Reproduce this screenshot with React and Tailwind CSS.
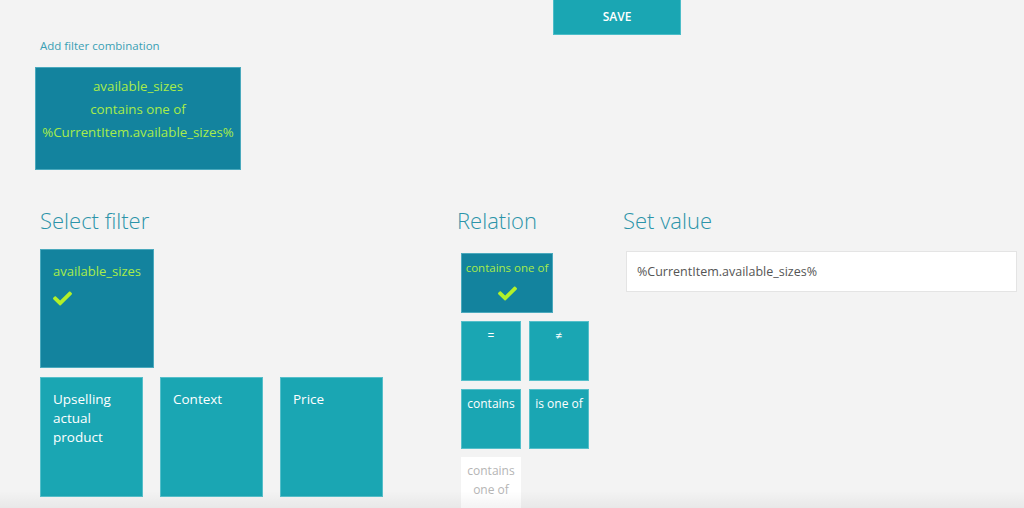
import React, { useState } from 'react';
import { FaCheck } from 'react-icons/fa';

const filters = [
  { id: 'upselling', label: 'Upselling actual product' },
  { id: 'context', label: 'Context' },
  { id: 'price', label: 'Price' },
];

const relations = ['=', '≠', 'contains', 'is one of'];

const App = () => {
  const [value, setValue] = useState('%CurrentItem.available_sizes%');

  return (
    <div className="relative min-h-[508px] bg-[#f3f3f3] font-['Open_Sans',sans-serif] overflow-hidden">
      {/* Save */}
      <div className="flex pl-[553px]">
        <button className="w-[128px] h-[35px] bg-[#1aa6b3] border border-[#4cbdc8] border-t-0 text-white text-[12px] font-semibold">
          SAVE
        </button>
      </div>

      {/* Combination */}
      <div className="pl-[40px] leading-[18px]">
        <a className="text-[11.5px] text-[#3a9fb3]">Add filter combination</a>
      </div>
      <div className="pl-[35px] pt-[12px]">
        <div className="w-[206px] h-[103px] bg-[#13839e] border border-[#4aa9bd] pt-[7px] text-center text-[13.3px] leading-[23px] text-[#a8ec4a]">
          <div>available_sizes</div>
          <div>contains one of</div>
          <div>%CurrentItem.available_sizes%</div>
        </div>
      </div>

      {/* Editor */}
      <div className="flex pl-[40px] pt-[35px]">
        {/* Select filter */}
        <div className="w-[417px]">
          <h2 className="text-[22px] font-light text-[#2b93a9] leading-[30px]">Select filter</h2>
          <div className="mt-[14px] w-[114px] h-[119px] bg-[#13839e] border border-[#4aa9bd] pt-[11px] pl-[12px] text-[13px] leading-[20px] text-[#a8ec4a]">
            <div>available_sizes</div>
            <FaCheck className="mt-[8px] w-[19px] h-[19px] text-[#b2f02a]" />
          </div>
          <div className="mt-[9px] flex gap-[17px]">
            {filters.map((f) => (
              <div
                key={f.id}
                className="w-[103px] h-[120px] bg-[#1aa6b3] border border-[#55bfca] pt-[12px] pl-[12px] pr-[10px] text-[13.5px] leading-[19px] text-white"
              >
                {f.label}
              </div>
            ))}
          </div>
        </div>

        {/* Relation */}
        <div className="w-[166px]">
          <h2 className="text-[22px] font-light text-[#2b93a9] leading-[30px]">Relation</h2>
          <div className="ml-[4px] mt-[18px] w-[92px] h-[60px] bg-[#13839e] border border-[#4aa9bd] pt-[4px] text-center text-[11.5px] leading-[20px] text-[#a8ec4a]">
            <div>contains one of</div>
            <FaCheck className="mx-auto mt-[6px] w-[19px] h-[19px] text-[#b2f02a]" />
          </div>
          <div className="ml-[4px] mt-[8px] grid grid-cols-[60px_60px] gap-x-[8px] gap-y-[8px]">
            {relations.map((r) => (
              <div
                key={r}
                className="h-[60px] bg-[#1aa6b3] border border-[#55bfca] pt-[4px] text-center text-[12px] leading-[20px] text-white"
              >
                {r}
              </div>
            ))}
            <div className="h-[60px] bg-white pt-[4px] text-center text-[12px] leading-[19px] text-[#b5b5b5]">
              contains one of
            </div>
          </div>
        </div>

        {/* Set value */}
        <div className="w-[400px]">
          <h2 className="text-[22px] font-light text-[#2b93a9] leading-[30px]">Set value</h2>
          <input
            value={value}
            onChange={(e) => setValue(e.target.value)}
            className="ml-[3px] mt-[16px] w-[391px] h-[41px] bg-white border border-[#e4e4e4] px-[10px] text-[12.5px] text-[#555] outline-none"
          />
        </div>
      </div>

      {/* bottom shade */}
      <div className="pointer-events-none absolute left-0 right-0 bottom-0 h-[26px] bg-gradient-to-b from-transparent to-black/[0.07]" />
    </div>
  );
};

export default App;
